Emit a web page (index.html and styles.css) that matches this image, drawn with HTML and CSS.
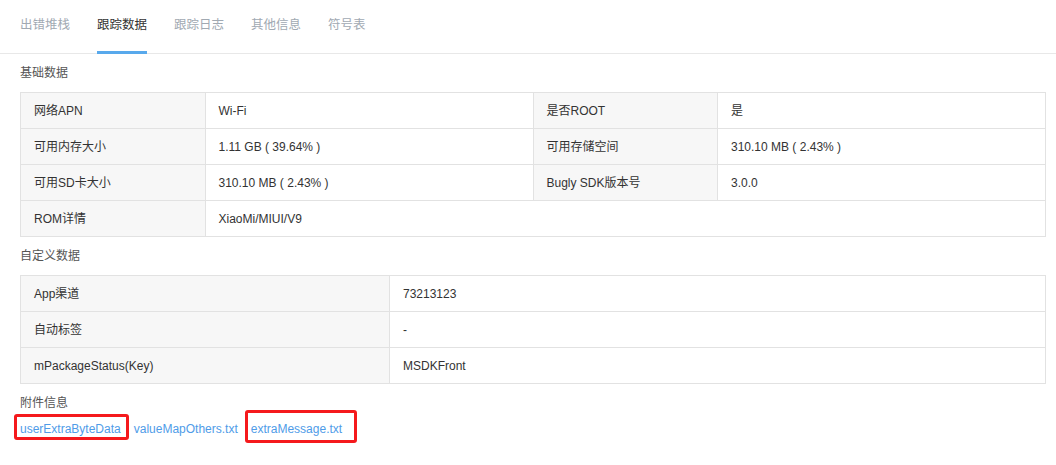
FILE: index.html
```html
<!DOCTYPE html>
<html lang="zh-CN">

<head>
  <meta charset="UTF-8">
  <meta name="viewport" content="width=device-width, initial-scale=1.0">
  <title>跟踪数据</title>
  <link rel="stylesheet" href="styles.css">
</head>

<body>
  <div class="tabs">
    <span class="tab">出错堆栈</span>
    <span class="tab active">跟踪数据</span>
    <span class="tab">跟踪日志</span>
    <span class="tab">其他信息</span>
    <span class="tab">符号表</span>
  </div>

  <div class="content">
    <h4 class="section-title">基础数据</h4>
    <table class="info-table base">
      <tr>
        <td class="label">网络APN</td>
        <td>Wi-Fi</td>
        <td class="label">是否ROOT</td>
        <td>是</td>
      </tr>
      <tr>
        <td class="label">可用内存大小</td>
        <td>1.11 GB ( 39.64% )</td>
        <td class="label">可用存储空间</td>
        <td>310.10 MB ( 2.43% )</td>
      </tr>
      <tr>
        <td class="label">可用SD卡大小</td>
        <td>310.10 MB ( 2.43% )</td>
        <td class="label">Bugly SDK版本号</td>
        <td>3.0.0</td>
      </tr>
      <tr>
        <td class="label">ROM详情</td>
        <td colspan="3">XiaoMi/MIUI/V9</td>
      </tr>
    </table>

    <h4 class="section-title">自定义数据</h4>
    <table class="info-table custom">
      <tr>
        <td class="label">App渠道</td>
        <td>73213123</td>
      </tr>
      <tr>
        <td class="label">自动标签</td>
        <td>-</td>
      </tr>
      <tr>
        <td class="label">mPackageStatus(Key)</td>
        <td>MSDKFront</td>
      </tr>
    </table>

    <h4 class="section-title">附件信息</h4>
    <div class="files">
      <a class="file" href="#">userExtraByteData<span class="mark mark-one"></span></a>
      <a class="file" href="#">valueMapOthers.txt</a>
      <a class="file" href="#">extraMessage.txt<span class="mark mark-two"></span></a>
    </div>
  </div>
</body>

</html>
```

FILE: styles.css
```css
* {
  margin: 0;
  padding: 0;
  box-sizing: border-box;
}

html,
body {
  height: 100%;
}

body {
  font-family: "Liberation Sans", "Noto Sans CJK SC", sans-serif;
  font-size: 12px;
  color: #333;
  background: #fff;
  overflow: hidden;
}

.tabs {
  display: flex;
  gap: 27px;
  padding-left: 20px;
  border-bottom: 1px solid #e8e8e8;
}

.tab {
  font-size: 12.5px;
  line-height: 18px;
  padding: 16px 0 17px;
  border-bottom: 3px solid transparent;
  margin-bottom: -1px;
  color: #a1a9b2;
}

.tab.active {
  color: #333;
  border-bottom-color: #58a9ec;
}

.content {
  padding: 0 10px 30px 20px;
}

.section-title {
  font-weight: normal;
  font-size: 12px;
  line-height: 18px;
  height: 18px;
  color: #555;
  margin: 10px 0;
}

.info-table {
  width: 100%;
  border-collapse: collapse;
  table-layout: fixed;
}

.info-table td {
  border: 1px solid #e2e2e2;
  height: 36px;
  padding: 0 13px;
  line-height: 18px;
  white-space: nowrap;
}

.info-table .label {
  background: #f7f7f7;
}

.base td:nth-child(odd) {
  width: 18%;
}

.base td:nth-child(even) {
  width: 32%;
}

.custom td.label {
  width: 36%;
}

.files {
  display: flex;
  gap: 13px;
  height: 18px;
  margin-top: -2px;
}

.file {
  position: relative;
  color: #4f9ce8;
  text-decoration: none;
  line-height: 18px;
}

.mark {
  position: absolute;
  border: 3px solid #f5191c;
  border-radius: 3px;
}

.mark-one {
  top: -6px;
  bottom: -2px;
  left: -6px;
  right: -8px;
}

.mark-two {
  top: -10px;
  bottom: -5px;
  left: -6px;
  right: -15px;
}
```
